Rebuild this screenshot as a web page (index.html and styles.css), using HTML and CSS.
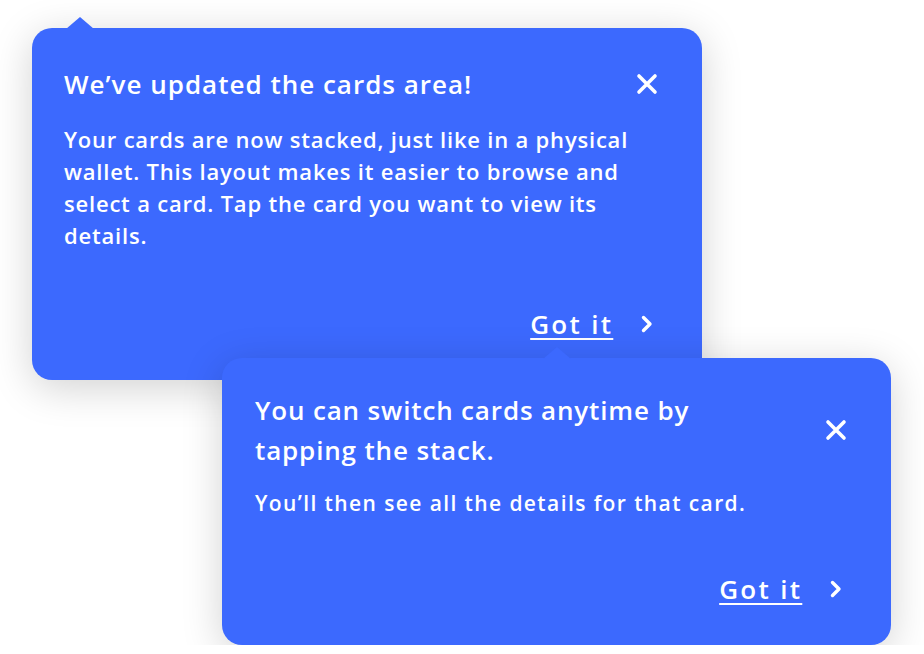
FILE: index.html
```html
<!DOCTYPE html>
<html>
<head>
  <title>Cards tips</title>
  <link rel="stylesheet" href="styles.css">
</head>
<body>
  <div class="stack">
    <div class="tip tip-first">
      <span class="tip-arrow"></span>
      <div class="tip-head">
        <h2 class="tip-title">We’ve updated the cards area!</h2>
        <button class="tip-close" aria-label="Close">
          <svg width="22" height="22" viewBox="0 0 22 22"><path d="M3 3 L19 19 M19 3 L3 19" stroke="#fff" stroke-width="3.6" stroke-linecap="round" fill="none"/></svg>
        </button>
      </div>
      <p class="tip-text">Your cards are now stacked, just like in a physical wallet. This layout makes it easier to browse and select a card. Tap the card you want to view its details.</p>
      <div class="tip-foot">
        <a href="#" class="tip-link">Got it</a>
        <svg class="chevron" width="14" height="18" viewBox="0 0 14 18"><path d="M3.5 2.5 L10 9 L3.5 15.5" stroke="#fff" stroke-width="3.4" stroke-linecap="round" stroke-linejoin="round" fill="none"/></svg>
      </div>
    </div>

    <div class="tip tip-second">
      <span class="tip-arrow"></span>
      <div class="tip-head">
        <h2 class="tip-title big">You can switch cards anytime by tapping the stack.</h2>
        <button class="tip-close" aria-label="Close">
          <svg width="22" height="22" viewBox="0 0 22 22"><path d="M3 3 L19 19 M19 3 L3 19" stroke="#fff" stroke-width="3.6" stroke-linecap="round" fill="none"/></svg>
        </button>
      </div>
      <p class="tip-text small">You’ll then see all the details for that card.</p>
      <div class="tip-foot">
        <a href="#" class="tip-link">Got it</a>
        <svg class="chevron" width="14" height="18" viewBox="0 0 14 18"><path d="M3.5 2.5 L10 9 L3.5 15.5" stroke="#fff" stroke-width="3.4" stroke-linecap="round" stroke-linejoin="round" fill="none"/></svg>
      </div>
    </div>
  </div>
</body>
</html>
```

FILE: styles.css
```css
body {
  margin: 0;
  background: #fff;
  font-family: "Open Sans", "Noto Sans", sans-serif;
  color: #fff;
}
.stack {
  display: flex;
  flex-direction: column;
  padding: 28px 0 0 32px;
}
.tip {
  position: relative;
  background: #3c69fe;
  border-radius: 20px;
  box-shadow: 0 8px 40px rgba(0, 0, 0, 0.18);
  box-sizing: border-box;
}
.tip-first {
  width: 670px;
  height: 352px;
  padding: 38px 32px 0 32px;
}
.tip-second {
  width: 669px;
  height: 287px;
  margin: -22px 0 0 190px;
  padding: 32px 44px 0 33px;
}
.tip-arrow {
  position: absolute;
  top: -11px;
  width: 0;
  height: 0;
  border-left: 14px solid transparent;
  border-right: 14px solid transparent;
  border-bottom: 12px solid #3c69fe;
}
.tip-first .tip-arrow { left: 34px; }
.tip-second .tip-arrow { left: 321px; }
.tip-head {
  display: flex;
  justify-content: space-between;
  align-items: center;
}
.tip-title {
  margin: 0;
  font-size: 26px;
  font-weight: 600;
  letter-spacing: 1px;
  line-height: 36px;
}
.tip-title.big {
  letter-spacing: 0.85px;
  line-height: 40px;
  width: 480px;
}
.tip-close {
  background: none;
  border: none;
  padding: 0;
  width: 22px;
  height: 22px;
  margin-right: 12px;
  cursor: pointer;
}
.tip-second .tip-close {
  margin-right: 0;
}
.tip-text {
  margin: 21px 0 0;
  font-size: 22px;
  font-weight: 600;
  letter-spacing: 0.8px;
  line-height: 32px;
  width: 590px;
}
.tip-text.small {
  font-size: 21px;
  letter-spacing: 1.4px;
  margin-top: 17px;
}
.tip-foot {
  position: absolute;
  right: 48px;
  bottom: 38px;
  display: flex;
  align-items: center;
  gap: 29px;
}
.tip-link {
  color: #fff;
  font-size: 26px;
  font-weight: 600;
  letter-spacing: 2.3px;
  margin-right: -2.3px;
  text-decoration: underline;
  text-underline-offset: 4px;
  text-decoration-thickness: 2px;
}
```
